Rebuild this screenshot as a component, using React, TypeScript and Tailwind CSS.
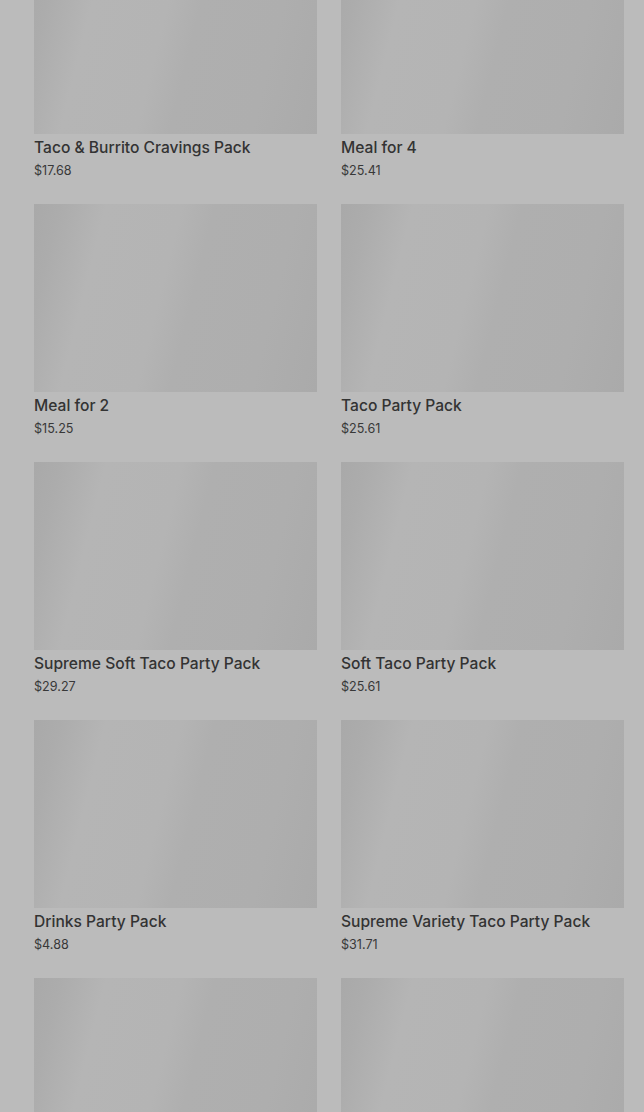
import React from 'react';

interface Item {
  name?: string;
  price?: string;
}

const items: Item[] = [
  { name: 'Taco & Burrito Cravings Pack', price: '$17.68' },
  { name: 'Meal for 4', price: '$25.41' },
  { name: 'Meal for 2', price: '$15.25' },
  { name: 'Taco Party Pack', price: '$25.61' },
  { name: 'Supreme Soft Taco Party Pack', price: '$29.27' },
  { name: 'Soft Taco Party Pack', price: '$25.61' },
  { name: 'Drinks Party Pack', price: '$4.88' },
  { name: 'Supreme Variety Taco Party Pack', price: '$31.71' },
  {},
  {},
];

const ItemCard: React.FC<{ item: Item }> = ({ item }) => (
  <div className="flex flex-col">
    <div className="h-[188px] w-full bg-[linear-gradient(104deg,#a9a9a9_0%,#acacac_8%,#b5b5b5_22%,#b4b4b4_45%,#afafaf_55%,#aeaeae_80%,#aaaaaa_100%)]" />
    {item.name && (
      <>
        <p className="mt-[4px] text-[15.6px] leading-[20px] font-medium text-[#333333]">{item.name}</p>
        <p className="mt-[4px] text-[12.6px] leading-[18px] text-[#383838]">{item.price}</p>
      </>
    )}
  </div>
);

export default function App() {
  return (
    <div className="h-[1112px] w-full overflow-hidden bg-[#bbbbbb] font-['Inter','Liberation_Sans',sans-serif]">
      <div className="-mt-[54px] grid grid-cols-2 gap-x-[24px] gap-y-[24px] pl-[34px] pr-[20px]">
        {items.map((item, i) => (
          <ItemCard key={i} item={item} />
        ))}
      </div>
    </div>
  );
}
